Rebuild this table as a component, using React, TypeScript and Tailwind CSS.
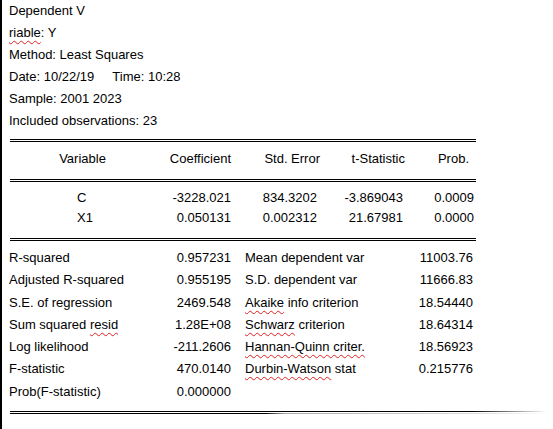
import React from "react";

const font = { fontFamily: '"Liberation Sans", Arial, sans-serif' };

function Wavy({ children }: { children: React.ReactNode }) {
  return (
    <span className="underline decoration-wavy decoration-[#e02020] decoration-[1px] underline-offset-[3px]">
      {children}
    </span>
  );
}

function DoubleLine({ className = "" }: { className?: string }) {
  return (
    <div className={"ml-[1px] w-[466px] flex flex-col gap-[1px] " + className}>
      <div className="h-[1px] bg-black" />
      <div className="h-[1px] bg-black" />
    </div>
  );
}

const coefRows = [
  ["C", "-3228.021", "834.3202", "-3.869043", "0.0009"],
  ["X1", "0.050131", "0.002312", "21.67981", "0.0000"],
];

const stats: [React.ReactNode, string, React.ReactNode, string][] = [
  ["R-squared", "0.957231", "Mean dependent var", "11003.76"],
  ["Adjusted R-squared", "0.955195", "S.D. dependent var", "11666.83"],
  ["S.E. of regression", "2469.548", <><Wavy>Akaike</Wavy> info criterion</>, "18.54440"],
  [<>Sum squared <Wavy>resid</Wavy></>, "1.28E+08", <><Wavy>Schwarz</Wavy> criterion</>, "18.64314"],
  ["Log likelihood", "-211.2606", <Wavy>Hannan-Quinn criter.</Wavy>, "18.56923"],
  ["F-statistic", "470.0140", <><Wavy>Durbin-Watson</Wavy> stat</>, "0.215776"],
  ["Prob(F-statistic)", "0.000000", "", ""],
];

export default function App() {
  return (
    <div
      className="w-[553px] h-[429px] bg-white text-black text-[13px] border-l-2 border-black overflow-hidden"
      style={font}
    >
      <div className="pl-[7px]">
        <div className="leading-[22px]">
          <div>Dependent V</div>
          <div>
            <Wavy>riable</Wavy>: Y
          </div>
          <div>Method: Least Squares</div>
          <div>
            Date: 10/22/19&nbsp;&nbsp;&nbsp;&nbsp;&nbsp;Time: 10:28
          </div>
          <div>Sample: 2001 2023</div>
          <div>Included observations: 23</div>
        </div>

        <DoubleLine className="mt-[7px]" />

        {/* header */}
        <div className="ml-[1px] grid grid-cols-[145px_80px_85px_85px_71px] h-[37px] pt-[6px] leading-[22px]">
          <div className="text-center">Variable</div>
          <div className="text-right pr-[4px]">Coefficient</div>
          <div className="text-right pr-[0px]">Std. Error</div>
          <div className="text-right pr-[0px]">t-Statistic</div>
          <div className="text-right pr-[7px]">Prob.</div>
        </div>

        <DoubleLine />

        <div className="pt-[6px] leading-[20px]">
          {coefRows.map((r) => (
            <div
              key={r[0]}
              className="ml-[1px] grid grid-cols-[145px_80px_85px_85px_71px]"
            >
              <div className="pl-[67px]">{r[0]}</div>
              <div className="text-right pr-[4px]">{r[1]}</div>
              <div className="text-right pr-[3px]">{r[2]}</div>
              <div className="text-right pr-[2px]">{r[3]}</div>
              <div className="text-right pr-[2px]">{r[4]}</div>
            </div>
          ))}
        </div>

        <DoubleLine className="mt-[10px]" />

        <div className="pt-[6px] leading-[22.3px]">
          {stats.map((r, i) => (
            <div key={i} className="grid grid-cols-[151px_71px_160px_82px]">
              <div className="whitespace-nowrap">{r[0]}</div>
              <div className="text-right">{r[1]}</div>
              <div className="pl-[14px] whitespace-nowrap">{r[2]}</div>
              <div className="text-right">{r[3]}</div>
            </div>
          ))}
        </div>

        <div className="mt-[8px] ml-[1px] w-[537px] flex flex-col gap-[1px]">
          <div className="h-[1px] bg-[linear-gradient(to_right,#000_0px,#000_462px,#fff_537px)]" />
          <div className="h-[1px] bg-[linear-gradient(to_right,#000_0px,#000_255px,#aaa_275px,#ddd_470px,#fff_537px)]" />
        </div>
      </div>
    </div>
  );
}
